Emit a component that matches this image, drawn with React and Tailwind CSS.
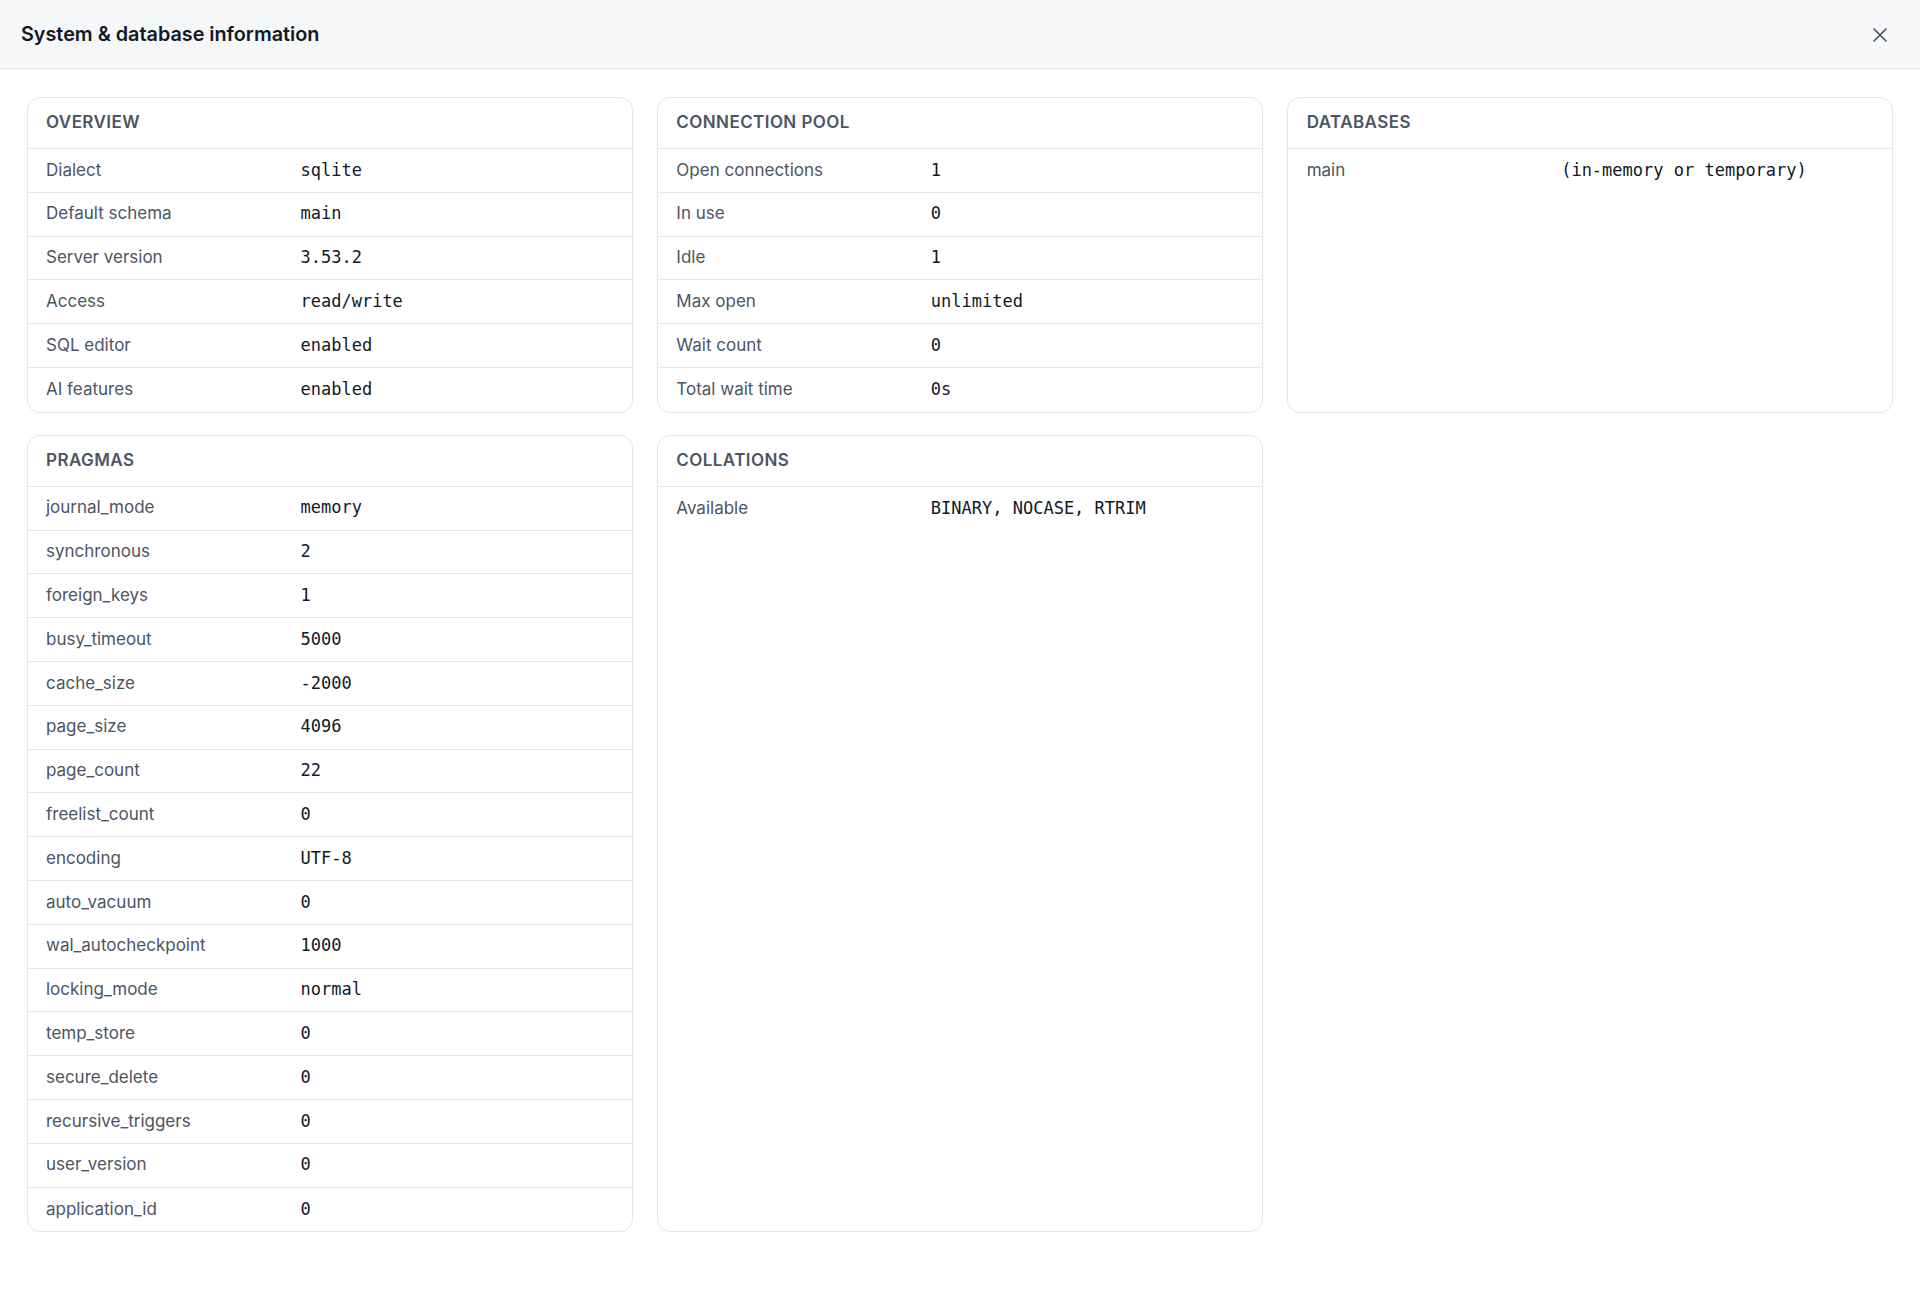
import React from "react";

const overview = [
  ["Dialect", "sqlite"],
  ["Default schema", "main"],
  ["Server version", "3.53.2"],
  ["Access", "read/write"],
  ["SQL editor", "enabled"],
  ["AI features", "enabled"],
];

const pool = [
  ["Open connections", "1"],
  ["In use", "0"],
  ["Idle", "1"],
  ["Max open", "unlimited"],
  ["Wait count", "0"],
  ["Total wait time", "0s"],
];

const databases = [["main", "(in-memory or temporary)"]];

const pragmas = [
  ["journal_mode", "memory"],
  ["synchronous", "2"],
  ["foreign_keys", "1"],
  ["busy_timeout", "5000"],
  ["cache_size", "-2000"],
  ["page_size", "4096"],
  ["page_count", "22"],
  ["freelist_count", "0"],
  ["encoding", "UTF-8"],
  ["auto_vacuum", "0"],
  ["wal_autocheckpoint", "1000"],
  ["locking_mode", "normal"],
  ["temp_store", "0"],
  ["secure_delete", "0"],
  ["recursive_triggers", "0"],
  ["user_version", "0"],
  ["application_id", "0"],
];

const collations = [["Available", "BINARY, NOCASE, RTRIM"]];

const sans = { fontFamily: "Inter, 'Noto Sans', sans-serif" };

function Card({ title, rows }) {
  return (
    <div className="flex flex-col rounded-[13px] border border-[#e5e7eb] bg-white overflow-hidden">
      <div className="flex h-[51px] shrink-0 items-center border-b border-[#e5e7eb] pl-[18.5px] pr-[18px]">
        <span className="text-[17px] font-semibold uppercase tracking-[0.025em] text-[#4b5563]">
          {title}
        </span>
      </div>
      <div className="flex flex-col">
        {rows.map(([k, v], i) => (
          <div
            key={k}
            className={
              "flex h-[43.8px] items-center pl-[18.5px] pr-[18px] " +
              (i < rows.length - 1 ? "border-b border-[#e5e7eb]" : "")
            }
          >
            <div className="w-[254.5px] shrink-0 text-[17px] text-[#4b5563]">{k}</div>
            <div
              className="text-[17px] text-[#111827]"
              style={{ fontFamily: "'DejaVu Sans Mono', 'Liberation Mono', monospace" }}
            >
              {v}
            </div>
          </div>
        ))}
      </div>
    </div>
  );
}

export default function App() {
  return (
    <div className="min-h-screen bg-white" style={sans}>
      <div className="flex h-[69px] items-center justify-between border-b border-[#e5e7eb] bg-[#f6f7f9] pl-[21px] pr-[33px] pt-[2px]">
        <h1 className="text-[19.8px] font-semibold text-[#111827]">System &amp; database information</h1>
        <button className="flex h-[14px] w-[14px] items-center justify-center text-[#4b5563]">
          <svg width="14" height="14" viewBox="0 0 14 14" fill="none" stroke="currentColor" strokeWidth="1.7" strokeLinecap="round">
            <path d="M1 1L13 13M13 1L1 13" />
          </svg>
        </button>
      </div>
      <div className="grid grid-cols-3 gap-x-6 gap-y-[22px] px-[26.5px] pt-[28px] pb-[27px]">
        <Card title="Overview" rows={overview} />
        <Card title="Connection pool" rows={pool} />
        <Card title="Databases" rows={databases} />
        <Card title="Pragmas" rows={pragmas} />
        <Card title="Collations" rows={collations} />
      </div>
    </div>
  );
}
